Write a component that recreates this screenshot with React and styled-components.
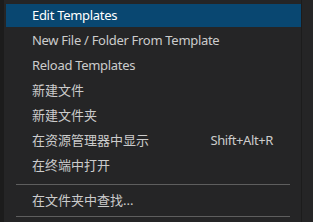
import React from "react";
import styled, { createGlobalStyle } from "styled-components";

const Global = createGlobalStyle`
  html, body { margin: 0; padding: 0; background: #252526; }
  body { width: 313px; height: 222px; overflow: hidden; }
  #root { height: 222px; }
`;

const Page = styled.div`
  display: flex;
  height: 222px;
  background: #252526;
`;

const LeftStrip = styled.div`
  flex: 0 0 4px;
  background: #1c1c1c;
`;

const Menu = styled.div`
  flex: 0 0 297px;
  box-sizing: border-box;
  display: flex;
  flex-direction: column;
  padding: 3px 0 0 2px;
  background: #252526;
  font-family: "Noto Sans", "Noto Sans CJK SC", sans-serif;
  font-size: 13px;
  color: #cccccc;
`;

const Edge = styled.div`
  flex: 0 0 1px;
  background: #1c1c1c;
`;

const Rest = styled.div`
  flex: 1;
  background: #252526;
`;

const Item = styled.div`
  display: flex;
  align-items: center;
  justify-content: space-between;
  height: 23px;
  margin: 1px 0;
  padding: 0 28px 0 26px;
  background: ${(p) => (p.$active ? "#094771" : "transparent")};
  color: ${(p) => (p.$active ? "#ffffff" : "#cccccc")};
  white-space: nowrap;
`;

const Label = styled.span`
  line-height: 23px;
  letter-spacing: ${(p) => (p.$cjk ? "0" : "-0.3px")};
`;

const Key = styled.span`
  line-height: 23px;
  letter-spacing: -0.4px;
`;

const Separator = styled.div`
  margin: ${(p) => p.$top}px 11px ${(p) => p.$bottom}px 10px;
  height: 1px;
  background: #5e5e5e;
`;

const items = [
  { label: "Edit Templates", active: true },
  { label: "New File / Folder From Template" },
  { label: "Reload Templates" },
  { label: "新建文件", cjk: true },
  { label: "新建文件夹", cjk: true },
  { label: "在资源管理器中显示", cjk: true, key: "Shift+Alt+R" },
  { label: "在终端中打开", cjk: true },
];

export default function App() {
  return (
    <>
      <Global />
      <Page>
        <LeftStrip />
        <Menu>
          {items.map((it) => (
            <Item key={it.label} $active={it.active}>
              <Label $cjk={it.cjk}>{it.label}</Label>
              {it.key && <Key>{it.key}</Key>}
            </Item>
          ))}
          <Separator $top={6} $bottom={3} />
          <Item>
            <Label $cjk>在文件夹中查找...</Label>
          </Item>
          <Separator $top={3} $bottom={4} />
        </Menu>
        <Edge />
        <Rest />
      </Page>
    </>
  );
}
